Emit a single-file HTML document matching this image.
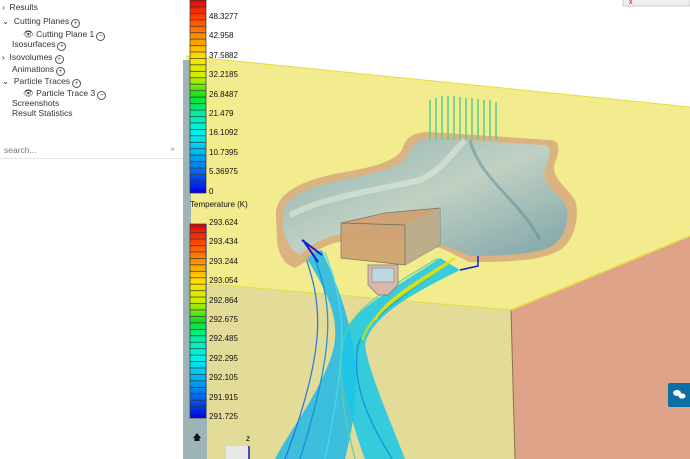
<!DOCTYPE html>
<html><head><meta charset="utf-8"><style>
body{margin:0;width:690px;height:459px;overflow:hidden;background:#fff;font-family:"Liberation Sans",sans-serif;position:relative}
.t{position:absolute;font-size:8.5px;color:#333;white-space:nowrap}
.pl{display:inline-block;width:7px;height:7px;border:1px solid #555;border-radius:50%;font-size:7px;line-height:7px;text-align:center;margin-left:2px;vertical-align:-1px;color:#555}
.lb{position:absolute;font-size:8px;color:#111;left:209px}
</style></head><body>
<svg width="690" height="459" style="position:absolute;left:0;top:0">
<defs>
<linearGradient id="cb" x1="0" y1="0" x2="0" y2="1">
<stop offset="0" stop-color="#f00000"/><stop offset=".15" stop-color="#ff7000"/><stop offset=".3" stop-color="#ffe000"/><stop offset=".4" stop-color="#c8f000"/><stop offset=".5" stop-color="#10e020"/><stop offset=".6" stop-color="#00f0b0"/><stop offset=".7" stop-color="#00f0f0"/><stop offset=".8" stop-color="#00b0f0"/><stop offset=".9" stop-color="#0060f0"/><stop offset="1" stop-color="#0000e0"/>
</linearGradient>
<pattern id="ln" width="10" height="6.45" patternUnits="userSpaceOnUse"><rect width="20" height=".7" fill="#333"/></pattern>
<linearGradient id="tube" x1="0" y1="0" x2="1" y2="1"><stop offset="0" stop-color="#7fb0b8"/><stop offset=".5" stop-color="#bcd6cf"/><stop offset="1" stop-color="#6fa2b0"/></linearGradient>
</defs>
<polygon points="186,56 690,107 690,236 511,310 186,282" fill="#f2ec8e"/>
<line x1="186" y1="56" x2="690" y2="107" stroke="#e6dc40" stroke-width="1"/>
<polygon points="186,282 511,310 515,459 186,459" fill="#e3db98"/>
<polygon points="511,310 690,236 690,459 515,459" fill="#dfa38a"/>
<line x1="511" y1="310" x2="515" y2="459" stroke="#8a7050" stroke-width="1"/>
<line x1="511" y1="310" x2="690" y2="236" stroke="#e6dc40" stroke-width="1.5"/>
<line x1="186" y1="282" x2="511" y2="310" stroke="#e6dc40" stroke-width="1"/>
<rect x="183" y="60" width="8" height="399" fill="#9fb4b6"/>
<rect x="189" y="224" width="18" height="235" fill="#9fb4b6"/>
<!-- streamline bundles -->
<path d="M305,255 C325,290 345,320 330,360 C315,400 290,430 275,459 L345,459 C355,420 360,380 352,340 C345,300 330,270 322,250 Z" fill="#20b8e8" opacity=".85"/>
<path d="M440,258 C400,285 360,305 345,330 C335,360 350,420 365,459 L405,459 C390,420 368,370 365,345 C370,315 420,290 460,270 Z" fill="#18c8e8" opacity=".85"/>
<g stroke-width="1.3" fill="none" opacity=".9">
<path d="M312,250 C330,300 340,330 300,459" stroke="#0a90d8"/>
<path d="M325,252 C342,300 352,330 325,459" stroke="#40e0f0"/>
<path d="M305,255 C320,300 330,340 285,459" stroke="#2070e0"/>
<path d="M445,266 C405,295 370,315 358,345 C350,390 375,430 392,459" stroke="#0a90d8"/>
<path d="M438,258 C395,285 355,305 345,335 C335,370 345,420 355,459" stroke="#60d0a0"/>
<path d="M450,262 C410,290 372,310 362,340" stroke="#c0e020" stroke-width="2.5"/>
<path d="M455,258 C420,280 385,300 375,320" stroke="#f0e000" stroke-width="2.5"/>
</g>
<!-- manifold -->
<path d="M276,215 C275,190 310,178 345,172 C380,166 395,160 402,150 C405,140 410,132 430,132 L550,140 C560,140 560,150 556,160 C548,175 565,185 575,200 C580,215 575,240 560,250 C540,262 500,262 470,262 L455,255 C430,240 390,240 360,240 C330,240 315,250 305,262 L295,268 C285,265 278,255 277,240 Z" fill="#d8b080" opacity=".95"/>
<path d="M283,215 C283,195 315,185 350,178 C385,172 402,165 408,155 C412,145 418,138 432,138 L545,145 C552,146 550,160 545,170 C540,182 558,192 566,205 C570,220 565,238 552,246 C535,255 500,256 470,256 C440,240 395,235 360,232 C330,232 310,245 300,255 C290,250 284,238 283,225 Z" fill="url(#tube)" opacity=".85"/>
<path d="M290,215 C330,195 380,190 420,180 C440,172 455,150 465,140" stroke="#e8f0e0" stroke-width="6" fill="none" opacity=".5"/>
<path d="M470,140 C480,180 520,200 540,240" stroke="#5a8e9e" stroke-width="3" fill="none" opacity=".5"/>
<g stroke="#60d090" stroke-width="2" opacity=".8"><line x1="430" y1="100" x2="430" y2="140"/><line x1="436" y1="98" x2="436" y2="140"/><line x1="442" y1="96" x2="442" y2="140"/><line x1="448" y1="96" x2="448" y2="140"/><line x1="454" y1="96" x2="454" y2="140"/><line x1="460" y1="97" x2="460" y2="140"/><line x1="466" y1="98" x2="466" y2="140"/><line x1="472" y1="98" x2="472" y2="140"/><line x1="478" y1="99" x2="478" y2="140"/><line x1="484" y1="100" x2="484" y2="140"/><line x1="490" y1="100" x2="490" y2="140"/><line x1="496" y1="102" x2="496" y2="140"/></g>
<polygon points="341,223 385,213 440,208 440,245 405,265 341,258" fill="#d0a070" stroke="#6a6a5a" stroke-width=".7" opacity=".9"/>
<polygon points="405,225 440,208 440,245 405,265" fill="#b8b090" opacity=".8"/>
<line x1="405" y1="225" x2="405" y2="265" stroke="#6a6a5a" stroke-width=".7"/>
<line x1="341" y1="223" x2="405" y2="225" stroke="#6a6a5a" stroke-width=".7"/>
<path d="M368,265 L398,265 L398,285 L388,295 L378,295 L368,285 Z" fill="#d9b8a8" stroke="#777" stroke-width=".7"/>
<rect x="372" y="268" width="22" height="14" fill="#bcd8e0" stroke="#777" stroke-width=".5"/>
<path d="M303,240 L318,262 M302,240 L322,255" stroke="#1020d0" stroke-width="2"/>
<path d="M460,270 L478,266 L478,256" stroke="#1020d0" stroke-width="1.5" fill="none"/>
<rect x="226" y="446" width="24" height="13" fill="#e8e8e8"/>
<line x1="249" y1="459" x2="249" y2="446" stroke="#1020a0" stroke-width="1.5"/>
<text x="246" y="441" font-size="8" font-family="Liberation Sans">z</text>
<rect x="190" y="0" width="16" height="193" fill="url(#cb)"/>
<rect x="190" y="0" width="16" height="193" fill="url(#ln)"/>
<rect x="190" y="0" width="16" height="193" fill="none" stroke="#333" stroke-width=".7"/>
<rect x="190" y="224" width="16" height="194" fill="url(#cb)"/>
<rect x="190" y="224" width="16" height="194" fill="url(#ln)"/>
<rect x="190" y="224" width="16" height="194" fill="none" stroke="#333" stroke-width=".7"/>
<path d="M193,438 L197,433 L201,438 L199.5,438 L199.5,441 L194.5,441 L194.5,438 Z" fill="#111"/>
<rect x="623" y="-2" width="67" height="8" fill="#eee" stroke="#ccc"/>
<text x="629" y="4" font-size="7" fill="#d00">x</text>
<rect x="668" y="383" width="24" height="24" rx="2" fill="#0a6fa3"/>
<ellipse cx="677" cy="393" rx="4" ry="3" fill="#fff"/><ellipse cx="682" cy="396" rx="3.5" ry="2.6" fill="#fff"/>
</svg>
<div class="lb" style="top:12px">48.3277</div>
<div class="lb" style="top:31px">42.958</div>
<div class="lb" style="top:51px">37.5882</div>
<div class="lb" style="top:70px">32.2185</div>
<div class="lb" style="top:90px">26.8487</div>
<div class="lb" style="top:109px">21.479</div>
<div class="lb" style="top:128px">16.1092</div>
<div class="lb" style="top:148px">10.7395</div>
<div class="lb" style="top:167px">5.36975</div>
<div class="lb" style="top:187px">0</div>
<div class="lb" style="top:200px;left:190px">Temperature (K)</div>
<div class="lb" style="top:218px">293.624</div>
<div class="lb" style="top:237px">293.434</div>
<div class="lb" style="top:257px">293.244</div>
<div class="lb" style="top:276px">293.054</div>
<div class="lb" style="top:296px">292.864</div>
<div class="lb" style="top:315px">292.675</div>
<div class="lb" style="top:334px">292.485</div>
<div class="lb" style="top:354px">292.295</div>
<div class="lb" style="top:373px">292.105</div>
<div class="lb" style="top:393px">291.915</div>
<div class="lb" style="top:412px">291.725</div>
<div class="t" style="top:2px;left:2px">›&nbsp; Results</div>
<div class="t" style="top:16px;left:2px">⌄&nbsp; Cutting Planes<span class="pl">+</span></div>
<div class="t" style="top:29px;left:23px">👁 Cutting Plane 1<span class="pl">−</span></div>
<div class="t" style="top:39px;left:12px">Isosurfaces<span class="pl">+</span></div>
<div class="t" style="top:52px;left:2px">›&nbsp; Isovolumes<span class="pl">+</span></div>
<div class="t" style="top:64px;left:12px">Animations<span class="pl">+</span></div>
<div class="t" style="top:76px;left:2px">⌄&nbsp; Particle Traces<span class="pl">+</span></div>
<div class="t" style="top:88px;left:23px">👁 Particle Trace 3<span class="pl">−</span></div>
<div class="t" style="top:98px;left:12px">Screenshots</div>
<div class="t" style="top:108px;left:12px">Result Statistics</div>
<div class="t" style="top:145px;left:4px;color:#777">search...</div>
<div class="t" style="top:144px;left:170px;color:#999">×</div>
<div style="position:absolute;left:0;top:158px;width:183px;height:1px;background:#e4e4e4"></div>
</body></html>
